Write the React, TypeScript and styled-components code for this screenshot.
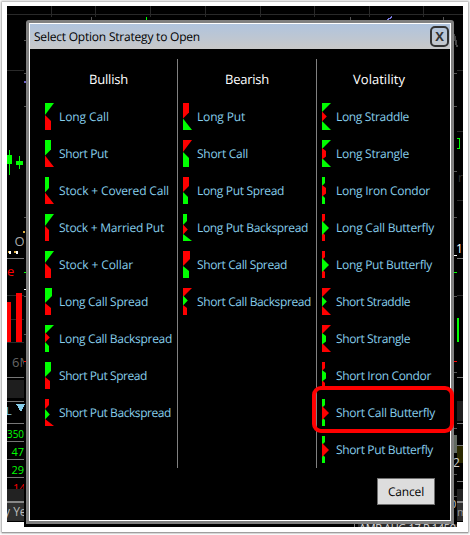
import React, { useLayoutEffect, useRef } from "react";
import styled, { createGlobalStyle } from "styled-components";

const G = "#00ff00";
const R = "#ff0000";

const GlobalStyle = createGlobalStyle`
  * { box-sizing: border-box; }
  html, body { margin: 0; background: #fff; overflow: hidden; }
  body { font-family: "Open Sans", "Noto Sans", sans-serif; }
`;

const Page = styled.div`
  width: 470px;
  height: 535px;
  padding: 2px;
  background: #fff;
`;

const Sheet = styled.div`
  position: relative;
  width: 466px;
  height: 530px;
  padding: 18px 0 0 24px;
  background: #fff;
  box-shadow: 0 0 2px 1px #aaa, 0 1px 1px #888;
`;

const Backdrop = styled.svg`
  position: absolute;
  left: -2px;
  top: -2px;
  width: 470px;
  height: 535px;
  font-family: "Open Sans", sans-serif;
`;

const Dialog = styled.section`
  position: relative;
  display: flex;
  flex-direction: column;
  width: 428px;
  height: 504px;
  border: 3px solid #808080;
  border-radius: 3px 3px 0 0;
  background: #000;
  box-shadow: inset 0 0 0 1px #fff;
  padding: 1px;
`;

const TitleBar = styled.header`
  display: flex;
  align-items: center;
  justify-content: space-between;
  height: 25px;
  flex: none;
  padding: 0 1px 0 4px;
  background: linear-gradient(#b0c4de, #c8c8c8);
`;

const LabelText = styled.span<{ $size: number }>`
  display: block;
  width: max-content;
  height: 18px;
  flex: none;
  white-space: nowrap;
  font-size: ${(p) => p.$size}px;
  line-height: 18px;
  text-rendering: geometricPrecision;
`;

const CloseButton = styled.button`
  display: flex;
  align-items: center;
  justify-content: center;
  width: 19px;
  height: 21px;
  padding: 0;
  border: 2px solid #333;
  border-radius: 5px;
  background: transparent;
  color: #333;
  font: bold 13px/15px "Open Sans", sans-serif;
`;

const Columns = styled.main`
  display: grid;
  grid-template-columns: 147px 139px 127px;
  height: 409px;
  margin-top: 10px;
`;

const Column = styled.section<{ $first?: boolean }>`
  height: 409px;
  border-left: ${(p) => (p.$first ? "0" : "1px solid #808080")};
  padding-left: ${(p) => (p.$first ? 15 : 5)}px;
`;

const Heading = styled.h2<{ $indent: number }>`
  height: 44px;
  margin: 0;
  padding: 11px 0 0 ${(p) => p.$indent}px;
  color: #fff;
  font-weight: 400;
`;

const Strategy = styled.div`
  display: flex;
  gap: 5px;
  height: 37px;
  color: #87ceeb;

  ${LabelText} { margin-top: 5px; }
`;

const PayoffIcon = styled.svg`
  width: 9px;
  height: 27px;
  flex: none;
`;

const Footer = styled.footer`
  display: flex;
  justify-content: flex-end;
  padding: 10px 15px 0 0;
`;

const CancelButton = styled.button`
  display: flex;
  align-items: center;
  justify-content: center;
  width: 58px;
  height: 27px;
  padding: 1px 0 0;
  border: 1px solid #707070;
  background: #ddd;
  color: #000;
  font-family: inherit;
`;

const Highlight = styled.div`
  position: absolute;
  left: 310px;
  top: 384px;
  width: 142px;
  height: 47px;
  border: 4px solid #ff0000;
  border-radius: 9px;
`;

// Tracks the text in or out so that it fills the given width.
function Label({ text, w, size = 12 }: { text: string; w: number; size?: number }) {
  const ref = useRef<HTMLSpanElement>(null);
  useLayoutEffect(() => {
    const el = ref.current;
    if (!el) return;
    el.style.letterSpacing = "0px";
    const natural = el.getBoundingClientRect().width;
    el.style.letterSpacing = `${(w - natural) / text.length}px`;
  }, [text, w, size]);
  return <LabelText ref={ref} $size={size}>{text}</LabelText>;
}

type Shape = [string, string];
type Item = { name: string; w: number; shapes: Shape[] };
type Group = { title: string; w: number; indent: number; items: Item[] };

const wings = (outer: string, inner: string, mid: string): Shape[] => [
  [outer, "0,0 9,0 0,9"],
  [outer, "0,18 9,27 0,27"],
  [inner, mid],
];
const posts = (outer: string, inner: string, mid: string): Shape[] => [
  [outer, "0,0 3,0 3,6 0,9"],
  [outer, "0,18 3,21 3,27 0,27"],
  [inner, mid],
];
const DIAMOND = "0,8.5 4.8,13.5 0,18.5";
const BULGE = "0,8 4,11 4,16.5 0,19.5";
const WIDE = "0,7 7,14 0,21";

const groups: Group[] = [
  {
    title: "Bullish", w: 39, indent: 44,
    items: [
      { name: "Long Call", w: 50, shapes: [[G, "0,0 9,0 0,12"], [R, "0,12 6,18 6,27 0,27"]] },
      { name: "Short Put", w: 49, shapes: [[G, "0,0 6,0 6,9.5 0,15.5"], [R, "0,15.5 9,27 0,27"]] },
      { name: "Stock + Covered Call", w: 110, shapes: [[G, "0,0 4,0 4,11 0,15.5"], [R, "0,15.5 9,27 0,27"]] },
      { name: "Stock + Married Put", w: 105, shapes: [[G, "0,0 9,0 0,12"], [R, "0,12 4,16 4,27 0,27"]] },
      { name: "Stock + Collar", w: 74, shapes: [[G, "0,0 9,0 0,12"], [R, "0,12 6,18 6,27 0,27"]] },
      { name: "Long Call Spread", w: 89, shapes: [[G, "0,0 7,0 7,8 0,15"], [R, "0,15 6,20 6,27 0,27"]] },
      { name: "Long Call Backspread", w: 113, shapes: [[G, "0,0 9,0 0,9"], [R, "0,7.5 4.8,12.5 0,17.5"], [G, "0,17 4,21 4,27 0,27"]] },
      { name: "Short Put Spread", w: 88, shapes: [[G, "0,0 6,0 6,9 0,15"], [R, "0,15 5,19 5,27 0,27"]] },
      { name: "Short Put Backspread", w: 112, shapes: [[R, "0,0 4,0 4,6 0,10"], [G, "0,10 4.8,15.5 0,20.5"], [R, "0,20 9,27 0,27"]] },
    ],
  },
  {
    title: "Bearish", w: 44, indent: 42,
    items: [
      { name: "Long Put", w: 48, shapes: [[R, "0,0 6,0 6,9.5 0,15.5"], [G, "0,15.5 9,27 0,27"]] },
      { name: "Short Call", w: 51, shapes: [[R, "0,0 9,0 0,12"], [G, "0,12 6,18 6,27 0,27"]] },
      { name: "Long Put Spread", w: 87, shapes: [[R, "0,0 6,0 6,9 0,15"], [G, "0,15 5,20 5,27 0,27"]] },
      { name: "Long Put Backspread", w: 111, shapes: [[G, "0,0 4,0 4,7 0,11"], [R, "0,10.5 4.8,15.5 0,20.5"], [G, "0,20 9,27 0,27"]] },
      { name: "Short Call Spread", w: 90, shapes: [[R, "0,0 7,0 7,8 0,15"], [G, "0,15 6,20 6,27 0,27"]] },
      { name: "Short Call Backspread", w: 114, shapes: [[R, "0,0 9,0 0,9"], [G, "0,7.5 4.8,12.5 0,17.5"], [R, "0,17 4,20 4,27 0,27"]] },
    ],
  },
  {
    title: "Volatility", w: 52, indent: 31,
    items: [
      { name: "Long Straddle", w: 73, shapes: wings(G, R, DIAMOND) },
      { name: "Long Strangle", w: 73, shapes: wings(G, R, BULGE) },
      { name: "Long Iron Condor", w: 94, shapes: posts(G, R, BULGE) },
      { name: "Long Call Butterfly", w: 98, shapes: posts(R, G, WIDE) },
      { name: "Long Put Butterfly", w: 96, shapes: posts(R, G, WIDE) },
      { name: "Short Straddle", w: 74, shapes: wings(R, G, DIAMOND) },
      { name: "Short Strangle", w: 74, shapes: wings(R, G, BULGE) },
      { name: "Short Iron Condor", w: 95, shapes: posts(R, G, BULGE) },
      { name: "Short Call Butterfly", w: 99, shapes: posts(G, R, WIDE) },
      { name: "Short Put Butterfly", w: 97, shapes: posts(G, R, WIDE) },
    ],
  },
];

function ChartBackdrop() {
  return (
    <Backdrop viewBox="0 0 470 535" aria-hidden="true">
      <defs>
        <clipPath id="chart"><path d="M7 6H463V522H457V527H24V522H7Z" /></clipPath>
        <clipPath id="left"><path d="M7 6H24V522H7Z" /></clipPath>
        <clipPath id="quote"><path d="M7 478H24V489H7Z" /></clipPath>
      </defs>
      <g clipPath="url(#chart)" shapeRendering="crispEdges">
        <rect width="470" height="535" fill="#000" />
        <path d="M7 14.5H463M51.5 6V17M95.5 6V17M150.5 6V17M205.5 6V17M260.5 6V17M314.5 6V17M369.5 6V17M423.5 6V17M7 70.5H24M457 70.5H463M457 131.5H463M457 200.5H463M7 295.5H24M457 295.5H463M7 319.5H24M7 342.5H24" stroke="#292929" />
        <path d="M91.5 17V20M350.5 17V20M443.5 17V20M24 40.5H26M454 40.5H457M24 73.5H26M454 73.5H457M24 106.5H26M454 106.5H457M24 217.5H26M454 171.5H457M454 217.5H457M24 296.5H26M454 296.5H457M24 334.5H26M454 372.5H457M454 428.5H457M454 474.5H457M454 496.5H457" stroke="#555" />
        <path d="M146.5 17V20" stroke={G} />
        <path d="M387 20L392 17" stroke="#7777dd" strokeWidth="1.5" />
        <path d="M454 34L457 47" stroke="#444" strokeWidth="2" />
        <path d="M24 81.5H26" stroke="#6b61c8" strokeWidth="2" />
        <path d="M9.5 150V175M19.5 156V169" stroke={G} />
        <path d="M7 155h5v9h-5zM16 161h7v4h-7z" fill={G} />
        <path d="M7 258.5H24M457 258.5H463M7 377.5H24M457 377.5H463M7 401.5H24M7 423.5H24M457 423.5H463M457 445.5H463M7 441.5H24M7 459.5H24M7 477.5H24M457 481.5H463" stroke="#777" />
        <path d="M24 272.5H26M454 272.5H457" stroke={G} />
        <path d="M24 289.5H26M454 255.5H457" stroke="#fff" />
        <path d="M24 231v2M8 252h2M14 252h2" stroke="#e0b040" strokeWidth="2" />
        <path d="M10 251v3M17 251v3" stroke="#fff" strokeWidth="2" />
        <path d="M7 302h4v40h-4zM16 293h6v49h-6z" fill={R} />
        <path d="M7 380h17v18H7zM457 401h6v20h-6z" fill="#1e1e1e" />
        <path d="M454 435h3v18h-3z" fill="#626a62" />
        <path d="M457 446h6v17h-6z" fill="#2b2900" />
        <path d="M7 489h17v12H7zM457 489h6v12h-6z" fill="#222" />
        <path d="M7 503h17v18H7zM457 503h6v18h-6z" fill="#303030" />
        <path d="M7 502H24M457 502H463" stroke="#888" strokeWidth="2" />
        <path d="M457 138.5H459.5V148.5H457" stroke={G} fill="none" />
        <path d="M458 318V342" stroke={G} strokeWidth="2" />
        <path d="M454 361.5H457M24 361.5H26" stroke={R} />
        <path d="M16 404H25L21 412Z" fill="#87ceeb" />
        <path d="M354.5 524V527" stroke="#777" />
        <path d="M358 524H457V527H358Z" fill="#292929" />
      </g>
      <g clipPath="url(#left)" fontSize="13">
        <text x="14.5" y="246" fill="#aaa">O</text>
        <text x="7" y="276" fill={R} fontSize="13">e</text>
        <text x="12" y="367" fill="#666">6M</text>
        <text x="6" y="415" fill="#87ceeb" fontSize="11">L</text>
        <g fontSize="11" fill={G} textAnchor="end">
          <text x="24" y="438" textLength="17" lengthAdjust="spacingAndGlyphs">350</text>
          <text x="24" y="456">47</text>
          <text x="24" y="474">29</text>
        </g>
        <text x="4" y="516" fill="#bbb" fontSize="12">y Yes</text>
      </g>
      <g clipPath="url(#quote)"><text x="13" y="492" fill={R} fontSize="11">14</text></g>
      <g clipPath="url(#chart)" fontSize="12">
        <text x="458" y="182" fill="#333">r</text>
        <text x="456" y="253" fill="#fff">17</text>
        <text x="453" y="467" fill="#ccc">2</text>
        <text x="450" y="508" fill="#ccc" fontSize="11">0</text>
        <text x="457" y="516" fill="#999" fontSize="11">m</text>
        <text x="359" y="532" fill="#ddd" fontSize="11" textLength="97">AMP AUG 17 P 1450</text>
      </g>
    </Backdrop>
  );
}

export default function App() {
  return (
    <Page>
      <GlobalStyle />
      <Sheet>
        <ChartBackdrop />
        <Dialog>
          <TitleBar>
            <Label text="Select Option Strategy to Open" w={166} />
            <CloseButton aria-label="Close">X</CloseButton>
          </TitleBar>
          <Columns>
            {groups.map((g, i) => (
              <Column key={g.title} $first={i === 0}>
                <Heading $indent={g.indent}><Label text={g.title} w={g.w} size={13} /></Heading>
                {g.items.map((item) => (
                  <Strategy key={item.name}>
                    <PayoffIcon viewBox="0 0 9 27">
                      {item.shapes.map(([fill, points], n) => <polygon key={n} fill={fill} points={points} />)}
                    </PayoffIcon>
                    <Label text={item.name} w={item.w} />
                  </Strategy>
                ))}
              </Column>
            ))}
          </Columns>
          <Footer>
            <CancelButton><Label text="Cancel" w={36} /></CancelButton>
          </Footer>
        </Dialog>
        <Highlight />
      </Sheet>
    </Page>
  );
}
